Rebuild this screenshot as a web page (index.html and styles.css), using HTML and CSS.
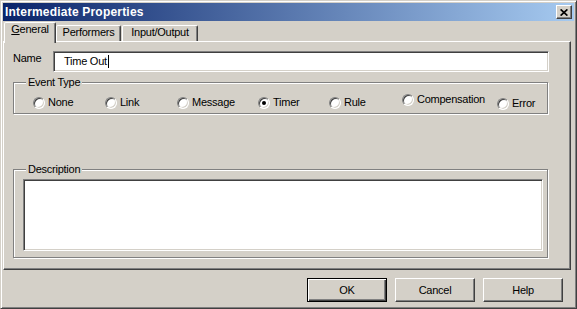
FILE: index.html
```
<!DOCTYPE html>
<html lang="en">
<head>
  <meta charset="UTF-8" />
  <title>Intermediate Properties</title>
  <link rel="stylesheet" href="styles.css">
</head>
<body>
  <div class="window">
    <div class="titlebar">
      <span class="title">Intermediate Properties</span>
      <button type="button" class="close">
        <svg width="8" height="7" viewBox="0 0 8 7"><path d="M0.6 0.4 L7.4 6.6 M7.4 0.4 L0.6 6.6" stroke="#000" stroke-width="1.7" fill="none"/></svg>
      </button>
    </div>

    <div class="tabs">
      <div class="tab tab-general active"><u>G</u>eneral</div>
      <div class="tab tab-performers">Performers</div>
      <div class="tab tab-io">Input/Output</div>
    </div>

    <div class="panel">
      <div class="name-row">
        <span class="name-label">Name</span>
        <div class="field">Time Out<span class="caret"></span></div>
      </div>

      <div class="group event-group">
        <div class="group-label">Event Type</div>
        <div class="radios">
          <span class="radio"><span class="circle"></span>None</span>
          <span class="radio"><span class="circle"></span>Link</span>
          <span class="radio"><span class="circle"></span>Message</span>
          <span class="radio"><span class="circle checked"></span>Timer</span>
          <span class="radio"><span class="circle"></span>Rule</span>
          <span class="radio up"><span class="circle"></span>Compensation</span>
          <span class="radio down"><span class="circle"></span>Error</span>
        </div>
      </div>

      <div class="group desc-group">
        <div class="group-label">Description</div>
        <div class="textarea"></div>
      </div>
    </div>

    <div class="buttons">
      <button type="button" class="btn default">OK</button>
      <button type="button" class="btn">Cancel</button>
      <button type="button" class="btn">Help</button>
    </div>
  </div>
</body>
</html>
```

FILE: styles.css
```
* {
  box-sizing: border-box;
}
body {
  margin: 0;
  font-family: "Liberation Sans", Arial, sans-serif;
  font-size: 11px;
  letter-spacing: -0.25px;
  color: #000;
  background: #d4d0c8;
}
.window {
  width: 577px;
  height: 309px;
  background: #d4d0c8;
  border: 1px solid;
  border-color: #d4d0c8 #404040 #404040 #d4d0c8;
  box-shadow: inset 1px 1px #fff, inset -1px -1px #808080;
  padding: 2px;
  display: flex;
  flex-direction: column;
}
.titlebar {
  height: 18px;
  flex: none;
  display: flex;
  align-items: center;
  padding-left: 2px;
  background: linear-gradient(to right, #0a246a, #a6caf0);
}
.title {
  color: #fff;
  font-weight: bold;
  font-size: 12px;
  letter-spacing: 0.2px;
}
.close {
  margin-left: auto;
  margin-right: 2px;
  width: 16px;
  height: 14px;
  padding: 0;
  display: flex;
  align-items: center;
  justify-content: center;
  background: #d4d0c8;
  border: 1px solid;
  border-color: #fff #404040 #404040 #fff;
  box-shadow: inset -1px -1px #808080;
}
.tabs {
  flex: none;
  height: 19px;
  margin-top: 1px;
  padding-left: 1px;
  display: flex;
  align-items: flex-end;
}
.tab {
  height: 16px;
  line-height: 13px;
  text-align: center;
  background: #d4d0c8;
  border: 1px solid;
  border-bottom: none;
  border-color: #fff #404040 transparent #fff;
  border-radius: 2px 2px 0 0;
  box-shadow: inset -1px 0 #808080;
}
.tab.active {
  height: 21px;
  margin-bottom: -2px;
  position: relative;
  z-index: 1;
}
.tab-general {
  width: 52px;
}
.tab-performers {
  width: 65px;
  margin-right: 1px;
}
.tab-io {
  width: 76px;
}
.panel {
  flex: none;
  height: 229px;
  margin-right: 3px;
  border: 1px solid;
  border-color: #fff #404040 #404040 #fff;
  box-shadow: inset -1px -1px #808080;
  padding: 9px 0 0 9px;
}
.name-row {
  display: flex;
  align-items: flex-start;
}
.name-label {
  width: 40px;
  line-height: 13px;
  padding-top: 1px;
}
.field,
.textarea {
  background: #fff;
  border: 1px solid;
  border-color: #808080 #fff #fff #808080;
  box-shadow: inset 1px 1px #404040, inset -1px -1px #d4d0c8;
}
.field {
  width: 496px;
  height: 21px;
  padding-left: 10px;
  line-height: 19px;
  display: flex;
  align-items: center;
}
.caret {
  display: inline-block;
  width: 1px;
  height: 13px;
  margin-left: 1px;
  background: #000;
}
.group {
  width: 535px;
  border: 1px solid #808080;
  box-shadow: 1px 1px #fff, inset 1px 1px #fff;
}
.group-label {
  width: max-content;
  margin: -7px 0 0 12px;
  padding: 0 2px;
  line-height: 13px;
  background: #d4d0c8;
}
.event-group {
  height: 32px;
  margin-top: 10px;
}
.radios {
  margin-top: 7px;
  padding-left: 19px;
  display: grid;
  grid-template-columns: 72px 72px 81px 71px 73px 95px auto;
  height: 13px;
}
.radio {
  display: flex;
  align-items: center;
  line-height: 13px;
  height: 13px;
}
.radio.up {
  margin-top: -3px;
}
.radio.down {
  margin-top: 1px;
}
.circle {
  width: 12px;
  height: 12px;
  margin-right: 3px;
  flex: none;
  border-radius: 50%;
  background: #fff;
  border: 1px solid;
  border-color: #808080 #fff #fff #808080;
  box-shadow: inset 1px 1px #404040, inset -1px -1px #d4d0c8;
  display: flex;
  align-items: center;
  justify-content: center;
}
.circle.checked::after {
  content: "";
  width: 4px;
  height: 4px;
  border-radius: 50%;
  background: #000;
}
.desc-group {
  height: 89px;
  margin-top: 55px;
}
.textarea {
  width: 520px;
  height: 72px;
  margin: 3px 0 0 9px;
}
.buttons {
  flex: none;
  margin-top: 8px;
  padding-right: 11px;
  display: flex;
  justify-content: flex-end;
  gap: 8px;
}
.btn {
  width: 80px;
  height: 24px;
  padding: 0;
  font: inherit;
  letter-spacing: inherit;
  color: #000;
  background: #d4d0c8;
  border: 1px solid;
  border-color: #fff #404040 #404040 #fff;
  box-shadow: inset -1px -1px #808080;
}
.btn.default {
  border-color: #000;
  box-shadow: inset 1px 1px #fff, inset -1px -1px #404040, inset -2px -2px #808080;
}
```
